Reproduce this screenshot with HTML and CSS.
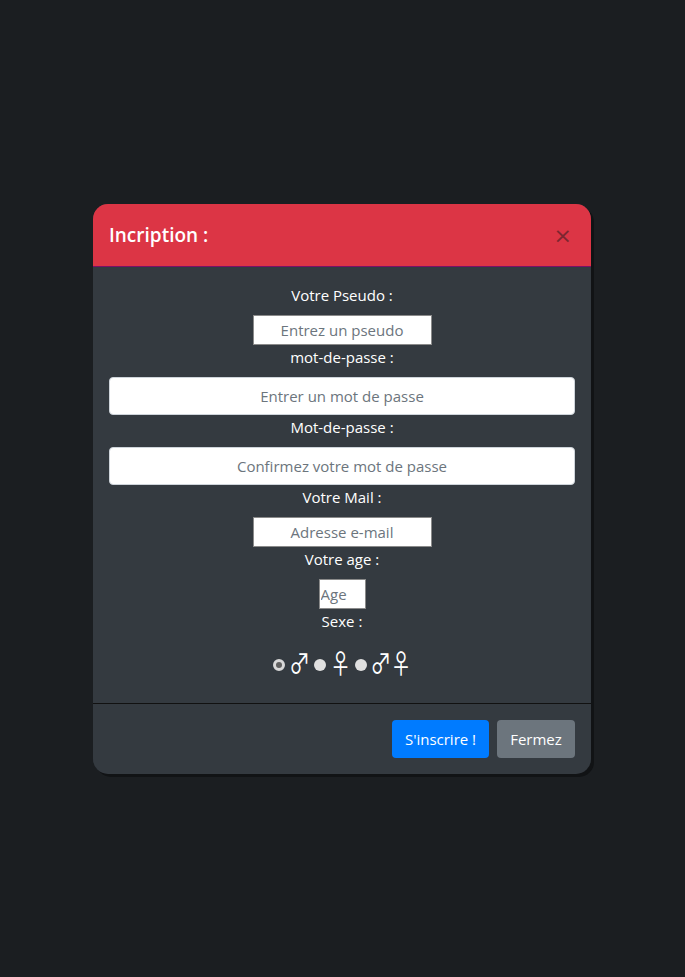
FILE: index.html
```html
<!DOCTYPE html>
<html lang="fr">
<head>
<meta charset="utf-8">
<title>Incription</title>
<link rel="stylesheet" href="styles.css">
</head>
<body>
<div class="backdrop">
  <div class="modal">
    <div class="modal-header">
      <h5 class="modal-title">Incription :</h5>
      <button class="close" type="button">&times;</button>
    </div>
    <div class="modal-body">
      <label class="lbl">Votre Pseudo :</label>
      <input class="small-input" type="text" placeholder="Entrez un pseudo">
      <label class="lbl">mot-de-passe :</label>
      <input class="form-control" type="password" placeholder="Entrer un mot de passe">
      <label class="lbl">Mot-de-passe :</label>
      <input class="form-control" type="password" placeholder="Confirmez votre mot de passe">
      <label class="lbl">Votre Mail :</label>
      <input class="small-input" type="email" placeholder="Adresse e-mail">
      <label class="lbl">Votre age :</label>
      <input class="small-input age" type="text" placeholder="Age">
      <label class="lbl">Sexe :</label>
      <div class="sexe">
        <span class="radio checked"></span><span class="sym">♂</span>
        <span class="radio"></span><span class="sym">♀</span>
        <span class="radio"></span><span class="sym both">♂♀</span>
      </div>
    </div>
    <div class="modal-footer">
      <button class="btn btn-primary" type="button">S'inscrire !</button>
      <button class="btn btn-secondary" type="button">Fermez</button>
    </div>
  </div>
</div>
</body>
</html>
```

FILE: styles.css
```css
* { box-sizing: border-box; }
html, body { margin: 0; padding: 0; }
body {
  background: #1b1e21;
  font-family: "Open Sans", "Noto Sans", sans-serif;
  font-size: 15px;
  line-height: 24px;
  color: #fff;
  height: 977px;
}
.backdrop {
  padding-top: 204px;
  display: flex;
  justify-content: center;
}
.modal {
  width: 498px;
  margin-left: -1px;
  background: #343a40;
  border-radius: 15px;
  box-shadow: 3px 3px 0 #111315;
  overflow: hidden;
}
.modal-header {
  background: #dc3545;
  height: 63px;
  padding: 16px;
  border-bottom: 1px solid #7a1066;
  display: flex;
  align-items: center;
  justify-content: space-between;
}
.modal-title {
  margin: 0;
  font-size: 19px;
  font-weight: 600;
  line-height: 30px;
  color: #fff;
}
.close {
  background: none;
  border: 0;
  padding: 0;
  margin-right: 3px;
  margin-top: 2px;
  font-family: "DejaVu Sans", sans-serif;
  font-size: 22px;
  font-weight: 400;
  line-height: 1;
  color: #7c2630;
}
.modal-body {
  padding: 16px;
  height: 436px;
  display: flex;
  flex-direction: column;
  align-items: center;
}
.lbl {
  display: block;
  line-height: 24px;
  margin-bottom: 8px;
  text-align: center;
}
input {
  font-family: inherit;
  font-size: 15px;
  text-align: center;
  color: #495057;
  background: #fff;
}
input::placeholder { color: #6c757d; opacity: 1; }
.small-input {
  width: 179px;
  height: 30px;
  border: 1px solid #8a8a8a;
  padding: 1px 2px;
}
.small-input.age {
  width: 47px;
  text-align: left;
  padding-left: 1px;
}
.form-control {
  width: 100%;
  height: 38px;
  border: 1px solid #ced4da;
  border-radius: 4px;
  padding: 6px 12px;
}
.sexe {
  height: 46px;
  display: flex;
  align-items: center;
  margin-top: -1px;
  margin-left: 3px;
}
.radio {
  flex: none;
  width: 12px;
  height: 12px;
  border-radius: 50%;
  background: #e0e0e0;
  margin-top: 4px;
}
.radio.checked {
  background: #5f5f5f;
  border: 3px solid #d8d8d8;
}
.sym {
  flex: none;
  width: 29px;
  display: flex;
  justify-content: center;
  font-family: "Noto Sans CJK JP", "DejaVu Sans", sans-serif;
  font-size: 27px;
  font-weight: 400;
  line-height: 30px;
  color: #fff;
  transform: scaleX(0.78);
}
.sym.both {
  width: 47px;
  letter-spacing: -1px;
}
.modal-footer {
  border-top: 1px solid #111;
  padding: 16px;
  display: flex;
  justify-content: flex-end;
  gap: 8px;
}
.btn {
  height: 38px;
  border: 1px solid transparent;
  border-radius: 4px;
  padding: 6px 12px;
  font-family: inherit;
  font-size: 15px;
  line-height: 24px;
  color: #fff;
  white-space: nowrap;
}
.btn-primary { background: #007bff; width: 97px; padding: 6px 4px; }
.btn-secondary { background: #6c757d; width: 78px; padding: 6px 4px; }
```
